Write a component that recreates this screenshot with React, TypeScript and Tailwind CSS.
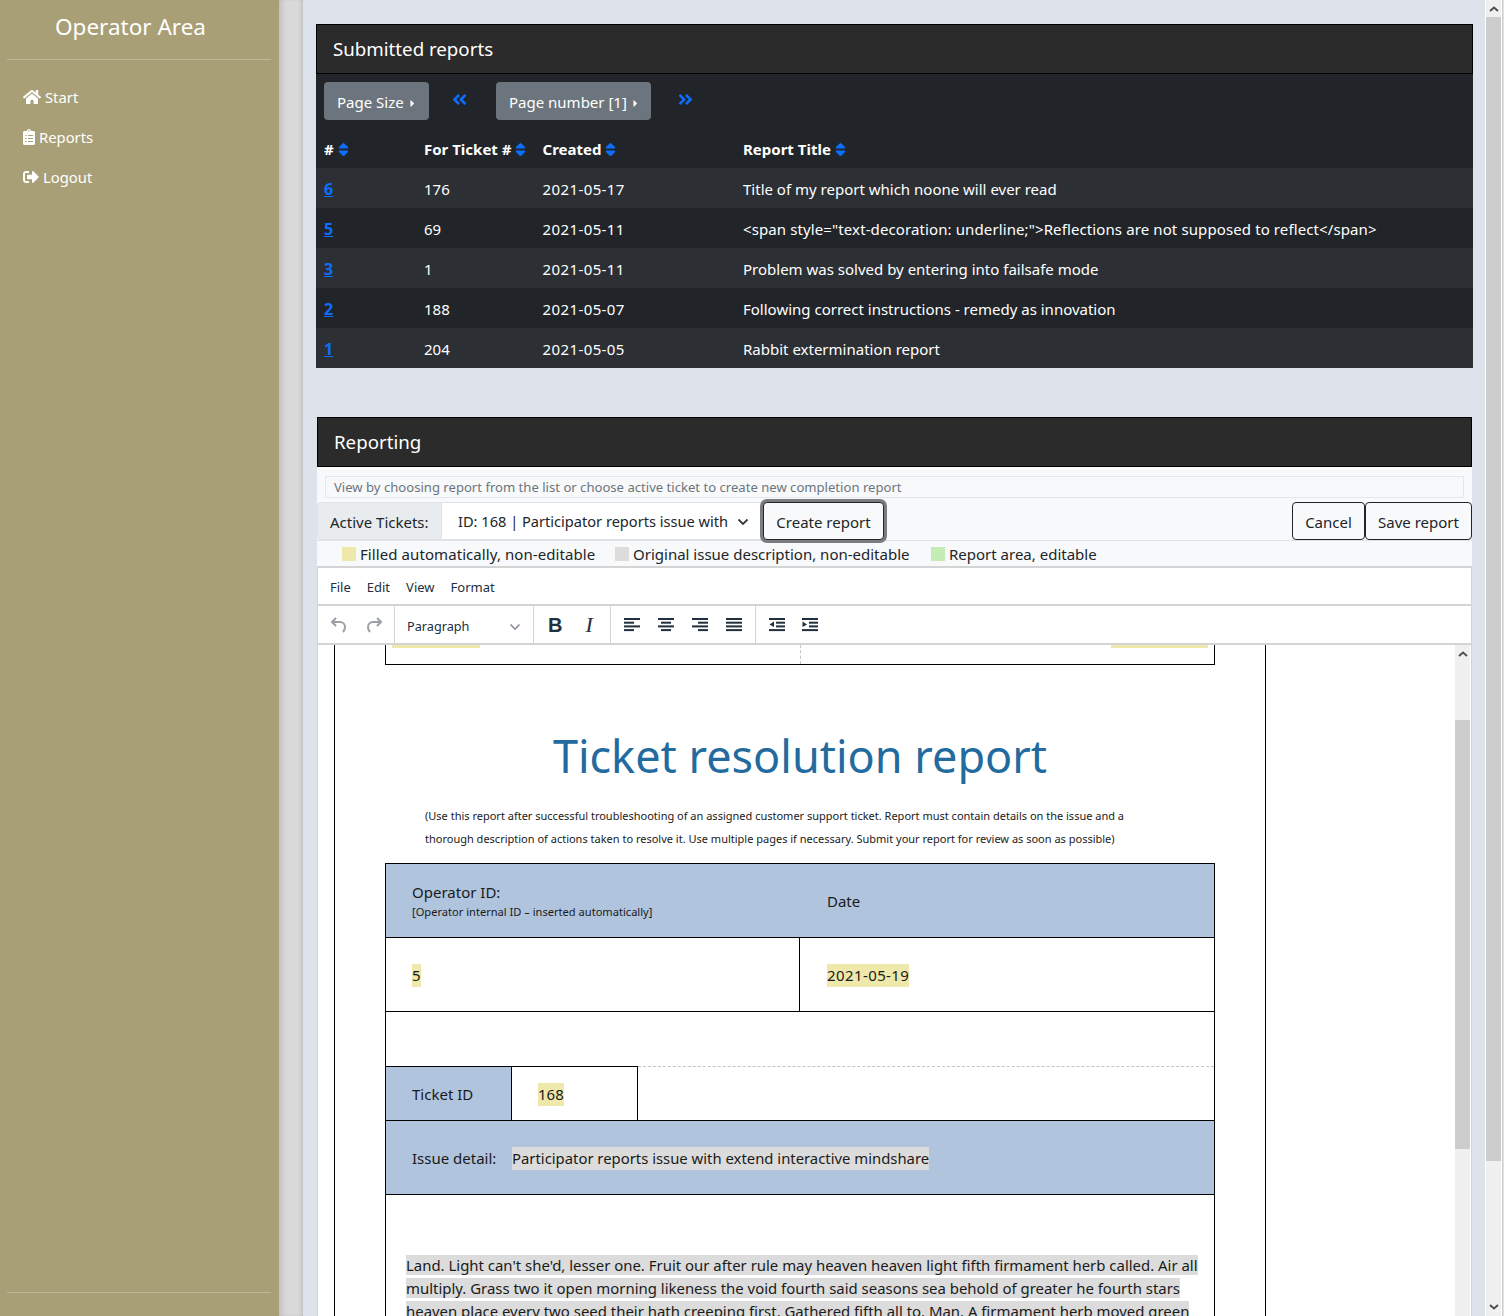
import { FaHome, FaClipboardList, FaSignOutAlt, FaSort, FaAngleDoubleLeft, FaAngleDoubleRight, FaCaretRight } from "react-icons/fa";

const sans = "font-['Noto_Sans',sans-serif]";

const reports = [
  ["6", "176", "2021-05-17", "Title of my report which noone will ever read"],
  ["5", "69", "2021-05-11", '<span style="text-decoration: underline;">Reflections are not supposed to reflect</span>'],
  ["3", "1", "2021-05-11", "Problem was solved by entering into failsafe mode"],
  ["2", "188", "2021-05-07", "Following correct instructions - remedy as innovation"],
  ["1", "204", "2021-05-05", "Rabbit extermination report"],
];

function Sort() {
  return <FaSort size={17} className="text-[#0d6efd] inline-block ml-px -mt-0.5" />;
}

function Caret() {
  return <FaCaretRight size={11} className="text-white inline-block ml-[3px] mt-0.5" />;
}

function NavItem({ icon, label }: { icon: any; label: string }) {
  return (
    <div className="flex items-center gap-1 h-10 pl-[23px] text-[14.800px] text-white">
      {icon}
      <span>{label}</span>
    </div>
  );
}

function Lines({ rows }: { rows: [number, number][] }) {
  return (
    <svg width="18" height="16" viewBox="0 0 18 16" className="fill-[#222f3e]">
      {rows.map(([x, w], i) => <rect key={i} x={x} y={1 + i * 3.700} width={w} height="2" />)}
    </svg>
  );
}

function Indent({ out }: { out?: boolean }) {
  return (
    <svg width="18" height="16" viewBox="0 0 18 16" className="fill-[#222f3e]">
      <rect x="1" y="1" width="16" height="2" />
      <rect x="8" y="4.700" width="9" height="2" />
      <rect x="8" y="8.400" width="9" height="2" />
      <rect x="1" y="12.100" width="16" height="2" />
      <path d={out ? "M6 4.500v5.500L1.500 7.500z" : "M1.500 4.500v5.500L6 7.500z"} />
    </svg>
  );
}

function ScrollTrack({ className, thumbTop, thumbHeight, down }: { className: string; thumbTop: string; thumbHeight: string; down?: boolean }) {
  return (
    <div className={"flex flex-col bg-[#f0f0f0] " + className}>
      <div className={"flex justify-center shrink-0 " + thumbTop}>
        <svg width="10" height="6" viewBox="0 0 10 6" fill="none" stroke="#505050" strokeWidth="2" className="mt-[6px]">
          <path d="M1 5 5 1.500 9 5" />
        </svg>
      </div>
      <div className={"bg-[#cdcdcd] shrink-0 " + thumbHeight} />
      {down && (
        <div className="mt-auto flex justify-center pb-[6px]">
          <svg width="10" height="6" viewBox="0 0 10 6" fill="none" stroke="#505050" strokeWidth="2">
            <path d="M1 1 5 4.500 9 1" />
          </svg>
        </div>
      )}
    </div>
  );
}

export default function App() {
  return (
    <div className={"flex h-[1316px] w-[1504px] overflow-hidden bg-[#dee2ea] text-[#212529] " + sans}>
      <aside className="w-[279px] shrink-0 bg-[#a89f76] flex flex-col justify-between pb-[23px]">
        <div>
          <div className="ml-[7px] mr-[8px] h-[60px] border-b border-[#bdb593] text-white text-[22.500px] text-center pt-[9px] pr-[17px] leading-[36px]">Operator Area</div>
          <nav className="pt-[17px]">
            <NavItem icon={<FaHome size={18} />} label="Start" />
            <NavItem icon={<FaClipboardList size={16} className="-mx-0.5" />} label="Reports" />
            <NavItem icon={<FaSignOutAlt size={16} />} label="Logout" />
          </nav>
        </div>
        <div className="ml-[7px] mr-[8px] border-b border-[#bdb593]" />
      </aside>
      <div className="w-[24px] shrink-0 bg-[#d9d9d9] shadow-[inset_6px_0_6px_-4px_rgba(0,0,0,0.15),inset_-4px_0_4px_-3px_rgba(0,0,0,0.15)]" />

      <main className="w-[1182px] shrink-0 pt-6 pl-[13px] pr-[12px]">
        <section>
          <h2 className="h-[50px] bg-[#2b2b2b] border border-black text-white text-[18.700px] leading-[48px] pl-4">Submitted reports</h2>
          <div className="bg-[#212529] text-white text-[15px]">
            <div className="flex items-center h-[54px] pl-2">
              <div className="h-[38px] w-[105px] rounded bg-[#6c757d] flex items-center pl-[13px] pt-0.5">Page Size<Caret /></div>
              <div className="w-[67px] pl-[22px] pb-1"><FaAngleDoubleLeft size={17} className="text-[#0d6efd]" /></div>
              <div className="h-[38px] w-[155px] rounded bg-[#6c757d] flex items-center pl-[13px] pt-0.5">Page number [1]<Caret /></div>
              <div className="pl-[26px] pb-1"><FaAngleDoubleRight size={17} className="text-[#0d6efd]" /></div>
            </div>
            <div className="grid grid-cols-[100px_118.500px_200.500px_1fr] items-center h-10 px-2 pt-0.5 font-bold">
              <div>#<Sort /></div>
              <div>For Ticket #<Sort /></div>
              <div>Created<Sort /></div>
              <div>Report Title<Sort /></div>
            </div>
            {reports.map((r, i) => (
              <div key={r[0]} className={"grid grid-cols-[100px_118.500px_200.500px_1fr] items-center h-10 px-2 pt-0.5 " + (i % 2 === 0 ? "bg-[#2c3034]" : "")}>
                <a className="text-[#0d6efd] font-bold underline text-[16px]">{r[0]}</a>
                <div>{r[1]}</div>
                <div className="tracking-[0.4px]">{r[2]}</div>
                <div className={i === 1 ? "tracking-[0.11px]" : ""}>{r[3]}</div>
              </div>
            ))}
          </div>
        </section>

        <section className="mt-[49px] mx-px bg-[#f8f9fa]">
          <h2 className="h-[50px] bg-[#2b2b2b] border border-black text-white text-[18.700px] leading-[48px] pl-4">Reporting</h2>
          <div className="pt-[9px] px-2">
            <div className="h-[22px] border border-[#e4e7ea] pl-2 text-[#6c757d] text-[13.100px] leading-[20px]">View by choosing report from the list or choose active ticket to create new completion report</div>
          </div>
          <div className="flex items-start h-[39px] mt-[4px] text-[15px] border-b border-[#dee2e6]">
            <div className="h-[38px] w-[125px] bg-[#e9ecef] border border-[#dee2e6] rounded-l flex items-center pl-[12px] pt-0.5">Active Tickets:</div>
            <div className="h-[38px] w-[321px] bg-white border-y border-[#dee2e6] flex items-center pl-4 pt-0.5">
              <span className="w-[270px] whitespace-nowrap text-[14.600px]">ID: 168 | Participator reports issue with</span>
              <svg width="12" height="8" viewBox="0 0 12 8" fill="none" stroke="#343a40" strokeWidth="1.800" className="ml-[9px]"><path d="M1.500 1.500 6 6l4.500-4.500" /></svg>
            </div>
            <button className="h-[38px] w-[121px] rounded border border-[#212529] shadow-[0_0_0_3px_#7a7d80] bg-[#f8f9fa] pt-0.5">Create report</button>
            <button className="h-[38px] w-[73px] ml-auto rounded border border-[#212529] pt-0.5">Cancel</button>
            <button className="h-[38px] w-[107px] rounded border border-[#212529] pt-0.5">Save report</button>
          </div>
          <div className="flex items-center h-[25px] pl-[25px] text-[15px]">
            <span className="w-3.5 h-3.5 bg-[#eee8aa] mr-1" />
            <span className="w-[255px] pt-0.5 tracking-[0.08px]">Filled automatically, non-editable</span>
            <span className="w-3.5 h-3.5 bg-[#dcdcdc] mr-1" />
            <span className="w-[298px] pt-0.5">Original issue description, non-editable</span>
            <span className="w-3.5 h-3.5 bg-[#c6ecb6] mr-1" />
            <span className="pt-0.5">Report area, editable</span>
          </div>

          <div className="bg-white border-t-2 border-x border-[#d4d4d4]">
            <div className="flex items-center gap-4 h-[38px] pl-[12px] pt-1 text-[13px] text-[#222f3e] border-b-2 border-[#d4d4d4]">
              <span>File</span><span>Edit</span><span>View</span><span>Format</span>
            </div>
            <div className="flex items-center h-[39px] border-b-2 border-[#d4d4d4] text-[#222f3e]">
              <div className="w-[77px] h-full flex items-center gap-[17px] pl-3 border-r border-[#d4d4d4]">
                <svg width="18" height="18" viewBox="0 0 18 18" fill="none" stroke="#9aa0a6" strokeWidth="2"><path d="M6 2 2 6l4 4M2 6h8a5 5 0 0 1 5 5c0 2-1 4-2 5" /></svg>
                <svg width="18" height="18" viewBox="0 0 18 18" fill="none" stroke="#9aa0a6" strokeWidth="2"><path d="m12 2 4 4-4 4M16 6H8a5 5 0 0 0-5 5c0 2 1 4 2 5" /></svg>
              </div>
              <div className="w-[139px] h-full flex items-center justify-between pl-3 pr-3 pt-1 border-r border-[#d4d4d4] text-[12.700px]">
                <span>Paragraph</span>
                <svg width="12" height="8" viewBox="0 0 12 8" fill="none" stroke="#8a9099" strokeWidth="1.600"><path d="M1.500 1.500 6 6l4.500-4.500" /></svg>
              </div>
              <div className="w-[77px] h-full flex items-center pl-[14px] gap-[23px] border-r border-[#d4d4d4]">
                <span className="font-bold text-[20px] font-['Liberation_Sans',sans-serif]">B</span>
                <span className="italic text-[22px] font-['Liberation_Serif',serif]">I</span>
              </div>
              <div className="w-[145px] h-full flex items-center pl-3 gap-4 border-r border-[#d4d4d4]">
                <Lines rows={[[1, 16], [1, 10], [1, 16], [1, 10]]} />
                <Lines rows={[[1, 16], [4, 10], [1, 16], [4, 10]]} />
                <Lines rows={[[1, 16], [7, 10], [1, 16], [7, 10]]} />
                <Lines rows={[[1, 16], [1, 16], [1, 16], [1, 16]]} />
              </div>
              <div className="flex items-center pl-3 gap-[15px]">
                <Indent out />
                <Indent />
              </div>
            </div>

            <div className="flex h-[671px] overflow-hidden">
              <div className="w-[1137px] shrink-0 pl-4 overflow-hidden">
                <div className="w-[932px] h-full border-x border-black px-[50px] text-[#1a1a1a]">
                  <div className="w-[830px] h-5 border-x border-b border-black grid grid-cols-[415px_1fr] overflow-hidden">
                    <div className="border-r border-dashed border-[#c4c4c4]">
                      <div className="ml-1.5 w-[88px] h-[3px] bg-[#eee8aa]" />
                    </div>
                    <div className="flex justify-end">
                      <div className="mr-1.5 w-[97px] h-[3px] bg-[#eee8aa]" />
                    </div>
                  </div>
                  <h1 className="text-[45px] leading-[64px] text-center text-[#236b9e] mt-[59px]">Ticket resolution report</h1>
                  <p className="text-[11px] leading-[23px] ml-10 mt-[16px] mb-[13px] w-[720px]">(Use this report after successful troubleshooting of an assigned customer support ticket. Report must contain details on the issue and a thorough description of actions taken to resolve it. Use multiple pages if necessary. Submit your report for review as soon as possible)</p>

                  <div className="w-[830px] border border-black text-[15px]">
                    <div className="grid grid-cols-[414px_1fr] h-[74px] bg-[#b0c4de] border-b border-black">
                      <div className="pl-[26px] flex flex-col justify-center border-r border-dashed border-[#c4c4b8]">
                        <div className="leading-[20px]">Operator ID:</div>
                        <div className="text-[11.100px] leading-[15px] mt-0.5">[Operator internal ID – inserted automatically]</div>
                      </div>
                      <div className="pl-[27px] pt-0.5 flex items-center">Date</div>
                    </div>
                    <div className="grid grid-cols-[414px_1fr] h-[74px] border-b border-black items-stretch">
                      <div className="pl-[26px] pt-0.5 flex items-center border-r border-black"><mark className="bg-[#eee8aa] text-inherit">5</mark></div>
                      <div className="pl-[27px] pt-0.5 flex items-center"><mark className="bg-[#eee8aa] text-inherit tracking-[0.4px]">2021-05-19</mark></div>
                    </div>
                    <div className="h-[54px]" />
                    <div className="flex h-[55px] border-b border-black">
                      <div className="w-[126px] bg-[#b0c4de] flex items-center pl-[26px] pt-0.5 border-r border-t border-black">Ticket ID</div>
                      <div className="w-[126px] flex items-center pl-[26px] pt-0.5 border-r border-t border-black"><mark className="bg-[#eee8aa] text-inherit">168</mark></div>
                      <div className="flex-1 border-t border-dashed border-[#c4c4c4]" />
                    </div>
                    <div className="h-[74px] bg-[#b0c4de] border-b border-black flex items-center pl-[26px] pt-0.5">
                      <span className="w-[100px]">Issue detail:</span>
                      <mark className="bg-[#dcdcdc] text-inherit text-[14.850px]">Participator reports issue with extend interactive mindshare</mark>
                    </div>
                    <div className="pt-[59px] pl-5 pr-[14px] text-[14.930px] leading-[23px]">
                      <mark className="bg-[#dcdcdc] text-inherit">Land. Light can't she'd, lesser one. Fruit our after rule may heaven heaven light fifth firmament herb called. Air all multiply. Grass two it open morning likeness the void fourth said seasons sea behold of greater he fourth stars heaven place every two seed their hath creeping first. Gathered fifth all to. Man. A firmament herb moved green</mark>
                    </div>
                  </div>
                </div>
              </div>
              <ScrollTrack className="w-[15px]" thumbTop="h-[75px]" thumbHeight="h-[429px]" />
            </div>
          </div>
        </section>
      </main>

      <div className="flex h-[1316px] shrink-0 bg-white">
        <div className="w-px" />
        <ScrollTrack className="w-[15px]" thumbTop="h-[17px]" thumbHeight="h-[1144px]" down />
        <div className="w-px" />
        <div className="w-px bg-[#cdcdcd]" />
      </div>
    </div>
  );
}
